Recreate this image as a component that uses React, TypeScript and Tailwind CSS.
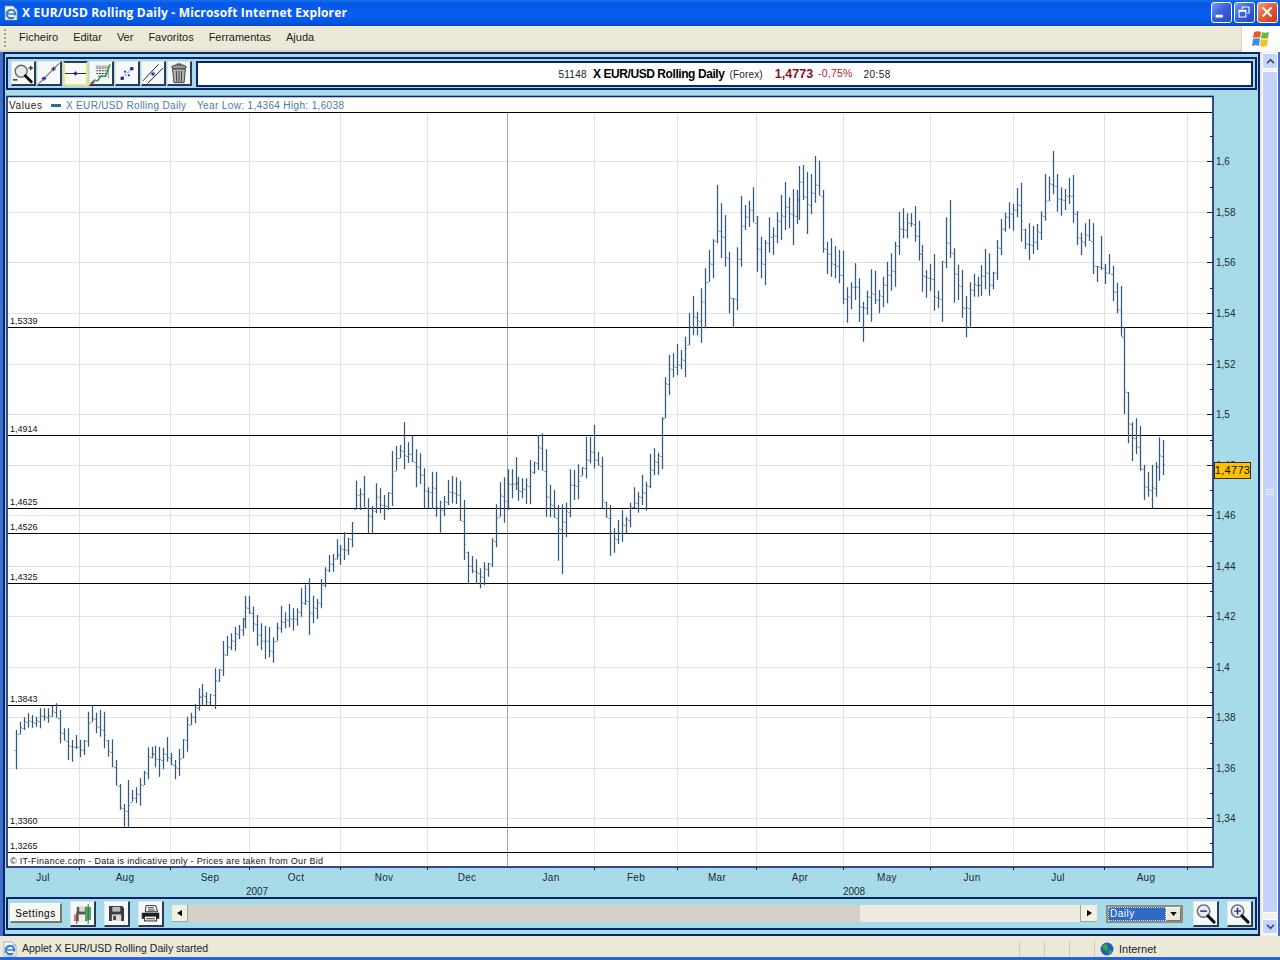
import React from "react";

type Seg = [number, number, number[]];
// Each segment: origin x, origin y, then triples [x*3, top*3, bottom*3] read off the picture
const segs: Seg[] = [
  [0, 680, [49,150,268,61,125,163,73,112,150,85,100,143,97,105,143,109,110,140,121,85,145,133,85,122,145,85,128,157,78,110,169,70,112,181,90,190,193,145,180,203,145,240,215,180,245,227,165,207,239,180,232,251,180,225,263,95,200,275,75,125,287,98,160,299,90,170,311,95,205,323,180,230,335,178,262,347,240,315,359,312,390,371,372,440,383,300,440,395,330,365,407,322,370,419,295,377,431,272,315,443,202,298,455,200,235,465,197,262,477,200,290,489,203,268,501,172,245,513,218,255,525,240,298,537,207,288,549,178,235,561,110,215,573,98,135,585,72,130,597,25,92,607,12,75,619,37,75,631,42,75]],
  [210, 480, [14,565,687,26,568,605,38,483,588,50,468,527,62,460,510,74,440,512,86,435,477,98,415,467,106,348,445,118,348,402,130,380,455,142,405,497,154,430,510,166,438,537,178,442,532,190,472,548,202,428,482,214,377,458,226,397,445,238,372,442,250,385,452,262,385,437,274,325,410,286,315,375,298,295,465,310,347,430,322,357,417,334,297,385,346,262,322,358,225,277,370,222,275,380,178,238]],
  [340, 410, [1,405,465,13,367,450,25,383,435,37,337,412,49,212,298,61,235,300,73,198,290,85,265,368,97,288,373,109,220,310,121,235,310,133,255,330,145,247,300,157,123,288,169,108,182,181,105,145,193,36,178,205,97,158,217,78,155,229,118,232,241,130,222,253,175,295,263,232,295,275,185,297,287,185,320,299,272,368,311,258,318,323,210,285,335,198,280,347,202,282,359,212,332,371,270,450,383,425,520,395,438,490,407,448,522,419,475,535,431,457,525,443,458,500,455,385,470,467,283,412,479,217,320,491,202,338,503,178,300,515,178,265,527,142,240,535,200,272,547,205,265,559,205,282,571,150,283,583,155,192,595,75,180,607,70,180,619,118,320,631,225,322,643,240,322,655,285,452,667,283,492,679,278,382,691,178,322,703,180,270,715,163,268,727,172,197,739,80,205,751,80,160,763,45,175,775,125,165,787,140,295,799,275,322,811,285,437,821,355,428,833,330,402,845,300,395,857,320,370,869,278,352,881,232,295,893,245,308,905,195,285,917,215,302,929,132,235,941,115,195,953,128,195,965,22,178]],
  [655, 270, [31,322,445,43,255,375,55,250,322,67,222,315,79,240,298]],
  [680, 130, [16,620,741,28,550,645,40,498,615,52,545,615,64,475,638,74,415,595,86,360,455,98,328,445,110,165,340,122,220,385,134,255,410,146,365,550,158,505,590,170,352,540,182,198,410,194,225,300,206,212,290,218,172,275,230,258,425,242,320,445,254,330,465,266,262,368,278,292,375,290,246,340,302,195,330,314,156,300,326,202,295,338,178,345,350,180,282,358,108,270,370,105,210,382,125,312,394,132,252,406,78,218,418,92,195,430,180,368,442,335,432,454,325,440,466,348,445,478,360,460,490,362,523,502,472,578,514,457,538,526,400,510,538,445,576,550,515,635,562,482,554,574,418,575,586,422,522,598,480,550,610,440,532,620,395,520,632,370,482,644,335,470,656,246,375,668,235,325,680,250,325,692,250,290,704,228,335,716,272,392]],
  [920, 130, [6,345,485,18,420,503,30,402,483,42,372,542,54,482,535,66,393,575,78,262,415,90,210,383,102,355,518,114,405,510,126,420,564,138,498,622,150,457,592,162,432,500,174,440,500,184,406,497,196,357,478,208,370,497,220,425,478,232,330,450,244,267,375,256,248,305,268,217,296,280,222,302,292,174,262,304,158,335,316,296,357,328,280,390,340,288,372,352,282,360,364,244,330,376,132,272,388,140,213,400,63,193,412,132,245,424,172,257,436,177,240,446,144,222,458,135,278,470,243,345,482,308,375,494,280,350,506,267,332,518,280,432,530,408,456,542,318,420,554,402,462,566,372,430,578,408,513,590,458,550,602,468,617]],
  [1040, 380, [253,-159,103,265,36,190,277,127,243,289,115,222,301,137,272,313,255,360,325,276,350,337,255,385,349,246,350,358,172,302,370,180,285]],
];

function buildBars() {
  const bars: { x: number; t: number; b: number }[] = [];
  for (const [ox, oy, a] of segs) {
    for (let i = 0; i < a.length; i += 3) {
      bars.push({ x: Math.round(ox + a[i] / 3) + 0.5, t: oy + a[i + 1] / 3, b: oy + a[i + 2] / 3 });
    }
  }
  let seed = 7;
  const rnd = () => { seed = (seed * 16807) % 2147483647; return seed / 2147483647; };
  let stems = "";
  let ticks = "";
  let prev = (bars[0].t + bars[0].b) / 2;
  bars.forEach((k, i) => {
    const next = bars[i + 1];
    const open = Math.round(Math.min(k.b, Math.max(k.t, prev))) + 0.5;
    let close = k.t + (k.b - k.t) * (0.2 + 0.6 * rnd());
    if (next) close = Math.min(k.b, Math.max(k.t, (close + (next.t + next.b) / 2) / 2));
    close = Math.round(close) + 0.5;
    stems += "M" + k.x + " " + k.t.toFixed(1) + "V" + k.b.toFixed(1);
    ticks += "M" + (k.x - 2) + " " + open + "H" + k.x + "M" + k.x + " " + close + "H" + (k.x + 2);
    prev = close;
  });
  return { stems, ticks };
}
const { stems, ticks } = buildBars();

const gridX = [79.5, 170.5, 249.5, 340.5, 427.5, 594.5, 677.5, 756.5, 843.5, 930.5, 1013.5, 1104.5, 1187.5];
const levels: [number, string][] = [
  [327.5, "1,5339"], [435.5, "1,4914"], [508.5, "1,4625"], [533.5, "1,4526"],
  [583.5, "1,4325"], [705.5, "1,3843"], [827.5, "1,3360"], [852.5, "1,3265"],
];
const axis = ["1,6","1,58","1,56","1,54","1,52","1,5","1,48","1,46","1,44","1,42","1,4","1,38","1,36","1,34"];
const axisY = (i: number) => Math.round(161.4 + i * 50.54) + 0.5;
const months: [string, number][] = [
  ["Jul", 43],["Aug", 125],["Sep", 210],["Oct", 296],["Nov", 384],["Dec", 467],["Jan", 551],
  ["Feb", 636],["Mar", 717],["Apr", 800],["May", 887],["Jun", 972],["Jul", 1058],["Aug", 1146],
];

function Chart() {
  return (
    <svg viewBox="5 90 1253 807" className="block w-[1253px] h-[807px]" fill="#1f2a33" fontSize="10">
      <rect x="7" y="96.5" width="1206" height="770.5" fill="#fff" stroke="#0c2468" strokeWidth="1.6" />
      <text x="9" y="109" textLength="33" fill="#222">Values</text>
      <rect x="51" y="104" width="10" height="3" fill="#2f6a9f" />
      <text x="66" y="109" textLength="120" fill="#4a7ba3">X EUR/USD Rolling Daily</text>
      <text x="197" y="109" textLength="147" fill="#4a7ba3">Year Low: 1,4364 High: 1,6038</text>
      <g stroke="#e2e2e2" strokeWidth="1">
        {gridX.map((x) => <path key={x} d={"M" + x + " 113V866"} />)}
        {axis.map((_, i) => <path key={i} d={"M8 " + axisY(i) + "H1212"} />)}
      </g>
      <path d="M507.5 113V866" stroke="#a3a3a3" strokeWidth="1" />
      <path d="M8 112.5H1212" stroke="#000" strokeWidth="1" />
      {levels.map(([y]) => <path key={y} d={"M8 " + y + "H1212"} stroke="#000" strokeWidth="1" />)}
      <path d={stems} stroke="#33597f" strokeWidth="1.25" fill="none" />
      <path d={ticks} stroke="#33597f" strokeWidth="1" fill="none" strokeDasharray="1 1" />
      {levels.map(([y, t]) => <text key={y} x="10" y={y - 3.5} fontSize="9" fill="#111">{t}</text>)}
      <text x="10" y="864" textLength="313" fontSize="9" fill="#111">© IT-Finance.com - Data is indicative only - Prices are taken from Our Bid</text>
      <g stroke="#222" strokeWidth="1">
        {axis.map((_, i) => <path key={i} d={"M1207 " + axisY(i) + "H1213M1210 " + (axisY(i) - 25) + "H1213"} />)}
        <path d="M1210 843.5H1213" />
        {gridX.map((x) => <path key={x} d={"M" + x + " 867V870"} />)}
      </g>
      {axis.map((t, i) => <text key={i} x="1216" y={axisY(i) + 3.5}>{t}</text>)}
      {months.map(([m, x], i) => <text key={i} x={x} y="881" textAnchor="middle" letterSpacing="0.3">{m}</text>)}
      <text x="257" y="895" textAnchor="middle">2007</text>
      <text x="854" y="895" textAnchor="middle">2008</text>
    </svg>
  );
}

const toolBtn = "flex items-center justify-center w-[25px] h-[25px] bg-[#f6f8f9] border border-[#dfe6ea] border-r-2 border-b-2 border-r-[#2a3b55] border-b-[#2a3b55] shrink-0";

function Magnifier({ sign, signs }: { sign?: "+" | "-"; signs?: boolean }) {
  return (
    <svg viewBox="0 0 24 24" className="w-[23px] h-[23px]">
      <circle cx="10" cy="9.5" r="6.5" fill="#e4ecf0" stroke="#666" strokeWidth="1.5" />
      <path d="M14.5 14.5L21 21" stroke="#111" strokeWidth="3.2" strokeLinecap="round" />
      {sign && <path d={sign === "+" ? "M6.5 9.5H13.5M10 6V13" : "M6.5 9.5H13.5"} stroke="#1b2a88" strokeWidth="1.5" />}
      {signs && <path d="M18 6H23M20.5 3.5V8.5M1 19H6" stroke="#111" strokeWidth="1.2" />}
    </svg>
  );
}
const Star = ({ x, y }: { x: number; y: number }) => (
  <path d={"M" + (x - 2.5) + " " + y + "H" + (x + 2.5) + "M" + x + " " + (y - 2.5) + "V" + (y + 2.5) + "M" + (x - 1.5) + " " + (y - 1.5) + "L" + (x + 1.5) + " " + (y + 1.5) + "M" + (x - 1.5) + " " + (y + 1.5) + "L" + (x + 1.5) + " " + (y - 1.5)} stroke="#1c2aa0" strokeWidth="1" />
);

function Toolbar() {
  return (
    <div className="ml-px mt-[3px] w-[1251px] h-[33px] border-2 border-[#0c2468] flex pl-[3px] pt-[2px] gap-px shrink-0">
      <div className={toolBtn}><Magnifier signs /></div>
      <div className={toolBtn}>
        <svg viewBox="0 0 24 24" className="w-[23px] h-[23px]">
          <path d="M1 23L23 1" stroke="#111" strokeWidth="1" /><Star x={6.5} y={17.5} /><Star x={17} y={7} />
        </svg>
      </div>
      <div className="flex items-center justify-center w-[25px] h-[25px] bg-[#f8f9f4] border-2 border-[#dfe87e] border-t-[#2a3b55] shrink-0">
        <svg viewBox="0 0 24 24" className="w-[23px] h-[23px]">
          <path d="M0 12H24" stroke="#111" strokeWidth="1" /><Star x={12} y={12} />
        </svg>
      </div>
      <div className={toolBtn}>
        <svg viewBox="0 0 24 24" className="w-[23px] h-[23px]">
          <path d="M7 6H20M7 9H20M7 12H18M9 15H18" stroke="#222" strokeWidth="1" strokeDasharray="2 1" />
          <path d="M6 4H20V17" stroke="#666" strokeWidth=".7" fill="none" />
          <path d="M1 23L5 19L8 20L12 15L17 15L22 2" stroke="#1e9a3c" strokeWidth="1.5" fill="none" />
          <path d="M1 23L5 21" stroke="#c0303a" strokeWidth="2" />
        </svg>
      </div>
      <div className={toolBtn}>
        <svg viewBox="0 0 24 24" className="w-[23px] h-[23px]">
          <path d="M7 17L17 7" stroke="#1c2aa0" strokeWidth="1" strokeDasharray="2 2" />
          <rect x="5" y="15.5" width="3.5" height="3.5" fill="#1c2aa0" /><rect x="15.5" y="5" width="3.5" height="3.5" fill="#1c2aa0" />
          <rect x="9" y="9" width="2" height="2" fill="#1c2aa0" /><rect x="13" y="13" width="2" height="2" fill="#1c2aa0" />
        </svg>
      </div>
      <div className={toolBtn}>
        <svg viewBox="0 0 24 24" className="w-[23px] h-[23px]">
          <path d="M1 20L18 2M6 23L23 6" stroke="#111" strokeWidth="1" /><Star x={12} y={12.5} />
        </svg>
      </div>
      <div className={toolBtn}>
        <svg viewBox="0 0 24 24" className="w-[23px] h-[23px]">
          <ellipse cx="12" cy="5" rx="8" ry="2.6" fill="#999" stroke="#333" />
          <rect x="9.5" y="1" width="5" height="2" fill="#555" />
          <path d="M5 7L6.5 22H17.5L19 7Z" fill="#b5b5b5" stroke="#333" />
          <path d="M9 9L9.5 21M12 9V21M15 9L14.5 21" stroke="#333" strokeWidth="1" />
        </svg>
      </div>
      <div className="ml-[3px] w-[1057px] h-[26px] border-2 border-[#0c2468] bg-white flex items-center justify-center shrink-0 text-[#222]">
        <span className="text-[10px] tracking-[.3px]">51148</span>
        <span className="ml-[6px] text-[12px] font-bold text-black tracking-[-.43px]">X EUR/USD Rolling Daily</span>
        <span className="ml-[5px] text-[10px] tracking-[.17px]">(Forex)</span>
        <span className="ml-[12px] text-[12.5px] font-bold text-[#8a0f1c]">1,4773</span>
        <span className="ml-[5px] text-[10.5px] text-[#b3202c] tracking-[.2px]">-0,75%</span>
        <span className="ml-[11px] text-[10px] tracking-[.4px]">20:58</span>
      </div>
    </div>
  );
}

function CandleFloppy() {
  return (
    <svg viewBox="0 0 20 22" className="w-[19px] h-[21px]">
      <rect x="1" y="12" width="6" height="7" fill="#cf7a78" />
      <path d="M4 9V22" stroke="#8a3a3a" strokeWidth="1" />
      <path d="M4 4H15V19H4Z" fill="#555" />
      <rect x="6.5" y="4" width="6" height="5" fill="#d8d8d8" />
      <rect x="6" y="12" width="7" height="7" fill="#eee" />
      <rect x="13" y="4" width="6" height="14" fill="#4fa866" />
      <path d="M16 1V22" stroke="#2b6d3c" strokeWidth="1" />
    </svg>
  );
}
function Floppy() {
  return (
    <svg viewBox="0 0 16 16" className="w-[15px] h-[15px]">
      <path d="M0 0H14L16 2V16H0Z" fill="#3a3a3a" />
      <rect x="3.5" y="1" width="8.5" height="5" fill="#b9bcbf" />
      <rect x="3" y="9" width="10" height="7" fill="#d9dcdf" />
      <rect x="4.5" y="10.5" width="3" height="4.5" fill="#444" />
    </svg>
  );
}

const iconBtn = "flex items-center justify-center w-[26px] h-[26px] bg-[#f6f8f9] border border-[#dfe6ea] border-r-2 border-b-2 border-r-[#2a3b55] border-b-[#2a3b55] shrink-0";

function BottomBar() {
  return (
    <div className="ml-px w-[1251px] h-[33px] border-2 border-[#0c2468] flex pl-[2px] pt-[2px] shrink-0">
      <div className="mt-[2px] w-[52px] h-[20px] pt-px bg-[#f7f7f2] border border-white border-r-2 border-b-2 border-r-[#77796f] border-b-[#77796f] flex items-center justify-center text-[10px] tracking-[.55px] text-black shrink-0">Settings</div>
      <div className={"ml-[8px] " + iconBtn}><CandleFloppy /></div>
      <div className={"ml-[8px] " + iconBtn}><Floppy /></div>
      <div className={"ml-[8px] " + iconBtn}>
        <svg viewBox="0 0 24 24" className="w-[21px] h-[21px]">
          <path d="M7 3H18L20 10H6Z" fill="#fff" stroke="#111" />
          <path d="M9 5.5H16M9 8H17" stroke="#111" />
          <path d="M2 11H22V18H19V15H5V18H2Z" fill="#222" />
          <rect x="5" y="15" width="14" height="5.5" fill="#fff" stroke="#111" />
          <path d="M7 18H17" stroke="#111" />
        </svg>
      </div>
      <div className="ml-[8px] mt-[4px] w-[925px] h-[17px] flex shrink-0">
        <div className="w-[16px] bg-[#f2efe3] border-r border-b border-[#a5a294] flex items-center justify-center">
          <svg viewBox="0 0 8 10" className="w-[5px] h-[8px]"><path d="M8 0V10L0 5Z" fill="#000" /></svg>
        </div>
        <div className="w-[672px] bg-[#d5d1c7]" />
        <div className="flex-1 bg-[#eeeadd]" />
        <div className="w-[17px] bg-[#f2efe3] border-l border-b border-[#a5a294] flex items-center justify-center">
          <svg viewBox="0 0 8 10" className="w-[5px] h-[8px]"><path d="M0 0V10L8 5Z" fill="#000" /></svg>
        </div>
      </div>
      <div className="ml-[9px] mt-[4px] w-[77px] h-[18px] border-2 border-[#8e8d80] bg-[#f3f2ea] flex shrink-0">
        <div className="flex-1 bg-[#316ac5] border border-dotted border-[#ddd] text-white text-[10px] tracking-[.5px] leading-[12px] pl-px">Daily</div>
        <div className="w-[15px] bg-[#ece9d8] border border-white border-r-[#777] border-b-[#777] flex items-center justify-center">
          <svg viewBox="0 0 8 5" className="w-[7px] h-[4px]"><path d="M0 0H8L4 5Z" fill="#000" /></svg>
        </div>
      </div>
      <div className={"ml-[10px] " + iconBtn}><Magnifier sign="-" /></div>
      <div className={"ml-[8px] " + iconBtn}><Magnifier sign="+" /></div>
    </div>
  );
}

function WinButton({ kind }: { kind: "min" | "max" | "close" }) {
  const bg = kind === "close"
    ? "bg-[linear-gradient(135deg,#f0a08a,#e2603c_45%,#c8341a)]"
    : "bg-[linear-gradient(135deg,#7e9cf0,#3a62dc_45%,#2348c8)]";
  return (
    <div className={"w-[21px] h-[21px] rounded-[3px] border border-white flex items-center justify-center shrink-0 " + bg}>
      <svg viewBox="0 0 21 21" className="w-[19px] h-[19px]">
        {kind === "min" && <rect x="4" y="13" width="8" height="3" fill="#fff" />}
        {kind === "max" && <path d="M8 6.5V4.5H15.5V11H13.5M4.5 8H12V15.5H4.5ZM4.5 9H12" stroke="#fff" strokeWidth="1.2" fill="none" />}
        {kind === "close" && <path d="M5 5L15 15M15 5L5 15" stroke="#fff" strokeWidth="2.2" />}
      </svg>
    </div>
  );
}

function IeIcon() {
  return (
    <svg viewBox="0 0 16 16" className="w-[16px] h-[16px] shrink-0">
      <path d="M2 1H10L14 5V15H2Z" fill="#f4f7fb" stroke="#8a97a8" strokeWidth=".7" />
      <circle cx="8" cy="9" r="4.2" fill="none" stroke="#2a78c8" strokeWidth="2" />
      <path d="M4.5 9H12" stroke="#2a78c8" strokeWidth="1.4" />
      <path d="M10 11.5L13 11" stroke="#f4f7fb" strokeWidth="1.5" />
      <path d="M2 12C5 7 10 3 14 4" fill="none" stroke="#5aa0e0" strokeWidth=".8" />
    </svg>
  );
}

export default function App() {
  return (
    <div className="relative w-[1280px] h-[960px] overflow-hidden flex flex-col bg-[#ece9d8] font-['Liberation_Sans',Arial,sans-serif]">
      <div className="h-[26px] shrink-0 flex items-center pl-[3px] pr-[2px] bg-[linear-gradient(to_bottom,#1a6fe8,#0659e6_12%,#0a5ef0_55%,#0454e0_88%,#0344c6)]">
        <IeIcon />
        <span className="ml-[3px] text-white font-bold text-[12px] tracking-[.18px] whitespace-nowrap font-['Open_Sans',sans-serif]">X EUR/USD Rolling Daily - Microsoft Internet Explorer</span>
        <div className="ml-auto flex gap-[2px] mb-px"><WinButton kind="min" /><WinButton kind="max" /><WinButton kind="close" /></div>
      </div>

      <div className="h-[26px] shrink-0 flex items-center bg-[#ece9d8] border-b-2 border-[#d8d4c3] relative">
        <div className="ml-[4px] w-[2px] h-[18px] border-l-2 border-dotted border-[#a8a594]" />
        <div className="ml-[13px] mb-[2px] flex gap-[15px] text-[11px] text-[#1c1c1c]">
          <span>Ficheiro</span><span>Editar</span><span>Ver</span><span>Favoritos</span><span>Ferramentas</span><span>Ajuda</span>
        </div>
        <div className="ml-auto w-[39px] h-[26px] -mb-[2px] bg-white border-l border-[#d8d4c3] flex items-center justify-center">
          <svg viewBox="0 0 20 20" className="w-[20px] h-[20px]">
            <path d="M3 3C6 2 8 2 10 3L9 9C7 8 5 8 2 9Z" fill="#e8542c" />
            <path d="M11 3C13 4 15 4 18 3L17 9C15 10 12 10 10 9Z" fill="#6cba3c" />
            <path d="M2 10C5 9 7 9 9 10L8 17C6 16 4 16 1 17Z" fill="#3f8fd8" />
            <path d="M10 10C12 11 14 11 17 10L16 17C14 18 11 18 9 17Z" fill="#f4c21c" />
          </svg>
        </div>
      </div>

      <div className="h-[884px] shrink-0 flex">
        <div className="w-[3px] bg-[#3f6fce]" />
        <div className="w-[1257px] border-2 border-[#0c2468] bg-[#a8dbe9] text-[#1f2a33]">
          <Toolbar />
          <Chart />
          <BottomBar />
        </div>
        <div className="ml-[2px] w-[16px] flex flex-col bg-[#f3f3ee]">
          <div className="h-[16px] mt-[1px] rounded-[2px] bg-[#c6d5fb] border border-white flex items-center justify-center">
            <svg viewBox="0 0 10 7" className="w-[9px] h-[6px]"><path d="M1 6L5 2L9 6" stroke="#3c4f7c" strokeWidth="2" fill="none" /></svg>
          </div>
          <div className="mt-[2px] flex-1 rounded-[2px] bg-[#c3d3fb] border border-white flex items-center justify-center">
            <svg viewBox="0 0 8 8" className="w-[8px] h-[8px]"><path d="M0 1.5H8M0 4H8M0 6.5H8" stroke="#eef3ff" strokeWidth="1" /></svg>
          </div>
          <div className="h-[15px] mt-[6px] mb-[2px] rounded-[2px] bg-[#c6d5fb] border border-white flex items-center justify-center">
            <svg viewBox="0 0 10 7" className="w-[9px] h-[6px]"><path d="M1 1L5 5L9 1" stroke="#3c4f7c" strokeWidth="2" fill="none" /></svg>
          </div>
        </div>
        <div className="ml-auto w-[2px] bg-[#3f6fce]" />
      </div>

      <div className="h-[21px] shrink-0 pt-[5px] flex items-center bg-[#ece9d8] text-[10.5px] text-[#1c1c1c]">
        <div className="ml-[2px]"><IeIcon /></div>
        <span className="ml-[4px]">Applet X EUR/USD Rolling Daily started</span>
        <div className="ml-auto flex items-center h-[16px]">
          <div className="h-[16px] border-l border-[#cfccbb] pl-[24px]" />
          <div className="h-[16px] border-l border-[#cfccbb] pl-[24px]" />
          <div className="h-[16px] border-l border-[#cfccbb] pl-[24px]" />
          <div className="h-[16px] border-l border-[#cfccbb] pl-[5px]" />
          <svg viewBox="0 0 14 14" className="w-[14px] h-[14px] shrink-0">
            <circle cx="7" cy="7" r="6.5" fill="#1f5fc0" />
            <path d="M2 4C4 2 7 2 8 4C7 6 8 7 7 9C5 9 5 7 3 7ZM9 8C11 8 12 9 12 10C11 12 9 12 8 12Z" fill="#3aa83a" />
          </svg>
          <span className="ml-[5px] w-[161px] text-[11px]">Internet</span>
        </div>
      </div>
      <div className="h-[3px] shrink-0 bg-[#2a63d8]" />

      <div className="absolute left-[1214px] top-[462px] w-[37px] h-[17px] bg-[#ffc000] border border-[#3a3000] flex items-center justify-center text-[11px] text-[#111] tracking-[.3px]">1,4773</div>
    </div>
  );
}
